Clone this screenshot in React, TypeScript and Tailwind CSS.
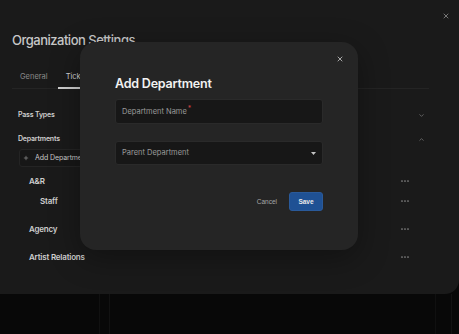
import { X, ChevronDown, ChevronUp, Plus } from 'lucide-react';

const departments = [
  { name: 'A&R', indent: false, gap: 'mt-[9px]' },
  { name: 'Staff', indent: true, gap: 'mt-[10px]' },
  { name: 'Agency', indent: false, gap: 'mt-[18px]' },
  { name: 'Artist Relations', indent: false, gap: 'mt-[18px]' },
];

const Dots = () => (
  <svg width="8" height="2" viewBox="0 0 8 2" className="text-[#8a8a8a]">
    <circle cx="1" cy="1" r="0.85" fill="currentColor" />
    <circle cx="4" cy="1" r="0.85" fill="currentColor" />
    <circle cx="7" cy="1" r="0.85" fill="currentColor" />
  </svg>
);

const App = () => {
  return (
    <div
      className="relative w-full h-[334px] overflow-hidden bg-[#080808]"
      style={{ fontFamily: 'Inter, "Noto Sans", sans-serif' }}
    >
      {/* faint background seams */}
      <div className="absolute left-[99px] top-[294px] bottom-0 w-px bg-[#111111]" />
      <div className="absolute left-[109px] top-[294px] bottom-0 w-px bg-[#121212]" />
      <div className="absolute left-[435px] top-[294px] bottom-0 w-px bg-[#101010]" />
      <div className="absolute left-[451px] top-[294px] bottom-0 w-px bg-[#121212]" />

      {/* settings panel */}
      <div className="relative h-[294px] bg-[#1a1a1a] rounded-br-[14px] pl-[12px] pr-[30px] pt-[33px]">
        <button className="absolute right-[9px] top-[12px] text-[#8a8a8a]">
          <X className="w-[8px] h-[8px]" strokeWidth={2.5} />
        </button>
        <h1 className="h-[14px] leading-[14px] text-[13px] font-medium text-[#c8c8c8] tracking-[-0.5px] whitespace-nowrap">
          Organization Settings
        </h1>

        <div className="mt-[25px] flex border-b border-[#242424]">
          <div className="pl-[8px] pr-[10px] pb-[6px] leading-[10px] text-[7.5px] text-[#8a8a8a]">General</div>
          <div className="pl-[8px] pr-[8px] pb-[5px] leading-[10px] text-[7.5px] text-[#d4d4d4] border-b-2 border-[#cfcfcf] -mb-px">
            Tickets
          </div>
        </div>

        <div className="pl-[6px] pr-[4px]">
          <div className="mt-[21px] flex items-center justify-between h-[10px]">
            <span className="text-[7px] font-semibold text-[#cfcfcf] tracking-[-0.2px]">Pass Types</span>
            <ChevronDown className="w-[7px] h-[7px] text-[#777777]" strokeWidth={2.5} />
          </div>
          <div className="mt-[14px] flex items-center justify-between h-[10px]">
            <span className="text-[7px] font-semibold text-[#cfcfcf] tracking-[-0.2px]">Departments</span>
            <ChevronUp className="w-[7px] h-[7px] text-[#777777]" strokeWidth={2.5} />
          </div>
          <div className="mt-[5px] ml-[1px] flex items-center h-[18px] w-[88px] bg-[#171717] border border-[#242424] rounded-[3px] pl-[3px]">
            <Plus className="w-[6px] h-[6px] text-[#9a9a9a]" strokeWidth={2.5} />
            <span className="ml-[6px] text-[7px] text-[#c8c8c8] whitespace-nowrap tracking-[-0.1px]">Add Department</span>
          </div>

          <div className="pl-[11px] pr-[16px]">
            {departments.map((d) => (
              <div key={d.name} className={`${d.gap} flex items-center justify-between h-[10px]`}>
                <span
                  className={`text-[8px] font-semibold text-[#cfcfcf] tracking-[-0.2px] ${d.indent ? 'pl-[11px]' : ''}`}
                >
                  {d.name}
                </span>
                <Dots />
              </div>
            ))}
          </div>
        </div>
      </div>

      {/* modal */}
      <div className="absolute left-[80px] top-[42px] w-[278px] h-[208px] bg-[#252525] rounded-[16px] px-[35px] pt-[35px] shadow-[0_8px_30px_rgba(0,0,0,0.35)]">
        <button className="absolute right-[14px] top-[13px] text-[#b4b4b4]">
          <X className="w-[8px] h-[8px]" strokeWidth={2.75} />
        </button>
        <h2 className="h-[14px] leading-[14px] text-[12.5px] font-semibold text-[#f2f2f2] tracking-[-0.2px]">
          Add Department
        </h2>

        <div className="mt-[8px] h-[25px] w-[208px] bg-[#171717] border border-[#2a2a2a] rounded-[3px] flex items-center pl-[6px]">
          <span className="text-[7.5px] text-[#9a9a9a]">Department Name</span>
          <span className="text-[7px] text-[#d04040] ml-[1px] -mt-[4px]">*</span>
        </div>

        <div className="mt-[17px] h-[24px] w-[208px] bg-[#171717] border border-[#2a2a2a] rounded-[3px] flex items-center justify-between pl-[6px] pr-[6px]">
          <span className="text-[7.5px] text-[#9a9a9a]">Parent Department</span>
          <svg width="5" height="3" viewBox="0 0 5 3" className="text-[#c4c4c4]">
            <path d="M0 0 L5 0 L2.5 3 Z" fill="currentColor" />
          </svg>
        </div>

        <div className="mt-[27px] flex items-center justify-end gap-[12px] w-[208px]">
          <span className="text-[6.5px] text-[#a8a8a8]" style={{ fontFamily: '"Liberation Sans", Arial, sans-serif' }}>
            Cancel
          </span>
          <button
            className="h-[19px] w-[34px] bg-[#1f5194] border border-[#2a5a9a] rounded-[3px] text-[6.5px] font-bold text-[#eaeaea]"
            style={{ fontFamily: '"Liberation Sans", Arial, sans-serif' }}
          >
            Save
          </button>
        </div>
      </div>
    </div>
  );
};

export default App;
